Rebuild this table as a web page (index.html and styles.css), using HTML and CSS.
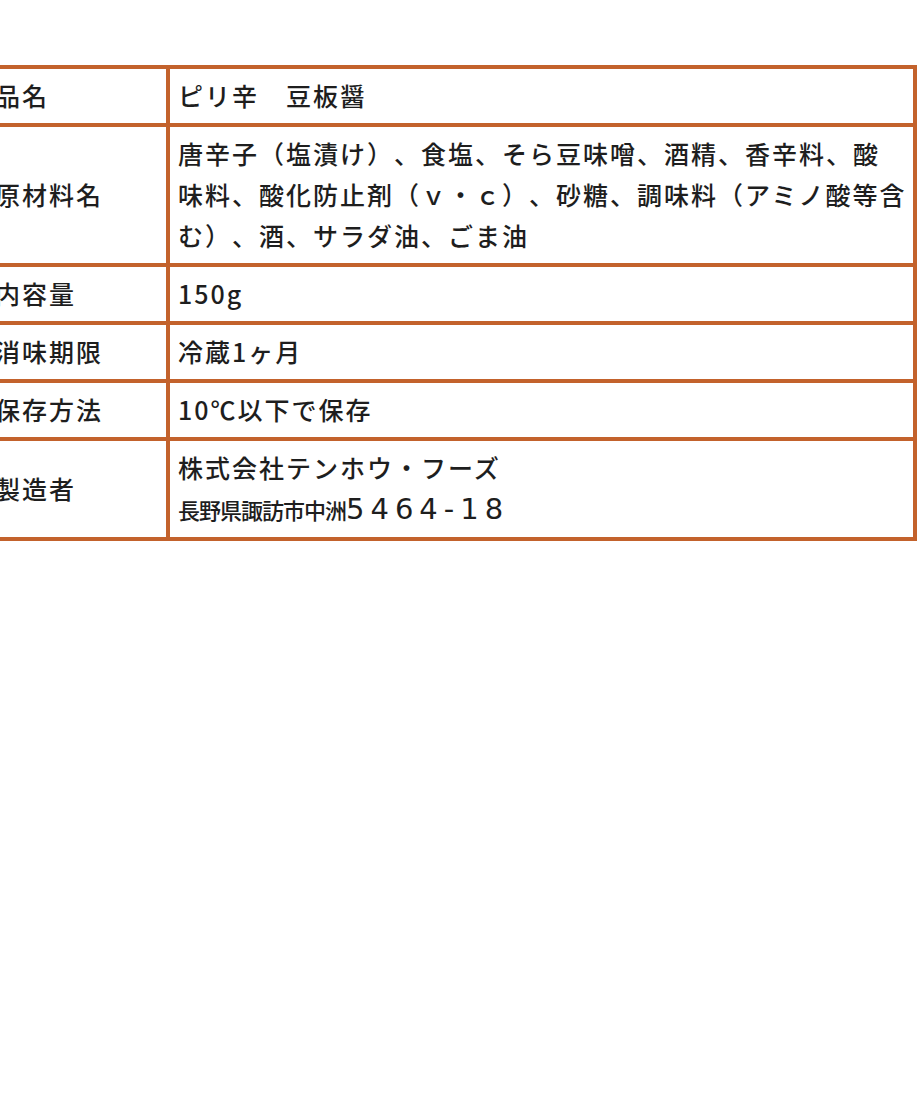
FILE: index.html
```html
<!DOCTYPE html>
<html lang="ja">
<head>
<meta charset="utf-8">
<title>商品情報</title>
<link rel="stylesheet" href="styles.css">
</head>
<body>
<dl class="spec">
  <dt>品名</dt>
  <dd>ピリ辛　豆板醤</dd>
  <dt>原材料名</dt>
  <dd>唐辛子（塩漬け）、食塩、そら豆味噌、酒精、香辛料、酸<br>味料、酸化防止剤（ｖ・ｃ）、砂糖、調味料（アミノ酸等含<br>む）、酒、サラダ油、ごま油</dd>
  <dt>内容量</dt>
  <dd>150g</dd>
  <dt>消味期限</dt>
  <dd>冷蔵1ヶ月</dd>
  <dt>保存方法</dt>
  <dd>10℃以下で保存</dd>
  <dt>製造者</dt>
  <dd>株式会社テンホウ・フーズ<br><span class="addr-place">長野県諏訪市中洲</span><span class="addr-num">5464-18</span></dd>
</dl>
</body>
</html>
```

FILE: styles.css
```css
body {
  margin: 0;
  background: #ffffff;
  font-family: "Noto Sans CJK JP", sans-serif;
  color: #1e1e1e;
}

.spec {
  display: grid;
  grid-template-columns: 179px 743px;
  gap: 4px;
  padding: 4px;
  width: max-content;
  margin: 65px 0 0 -17px;
  background: #c3622c;
  font-size: 25px;
  font-weight: 500;
  line-height: 41px;
  letter-spacing: 2px;
  text-spacing-trim: space-all;
}

.spec dt,
.spec dd {
  margin: 0;
  background: #ffffff;
  padding: 6px 4px 7px 8px;
}

.spec dt {
  display: flex;
  align-items: center;
}

.addr-place {
  font-size: 22px;
  letter-spacing: -1px;
}

.addr-num {
  font-family: "DejaVu Sans", sans-serif;
  font-weight: 400;
  font-size: 29px;
  letter-spacing: 6px;
}
```
